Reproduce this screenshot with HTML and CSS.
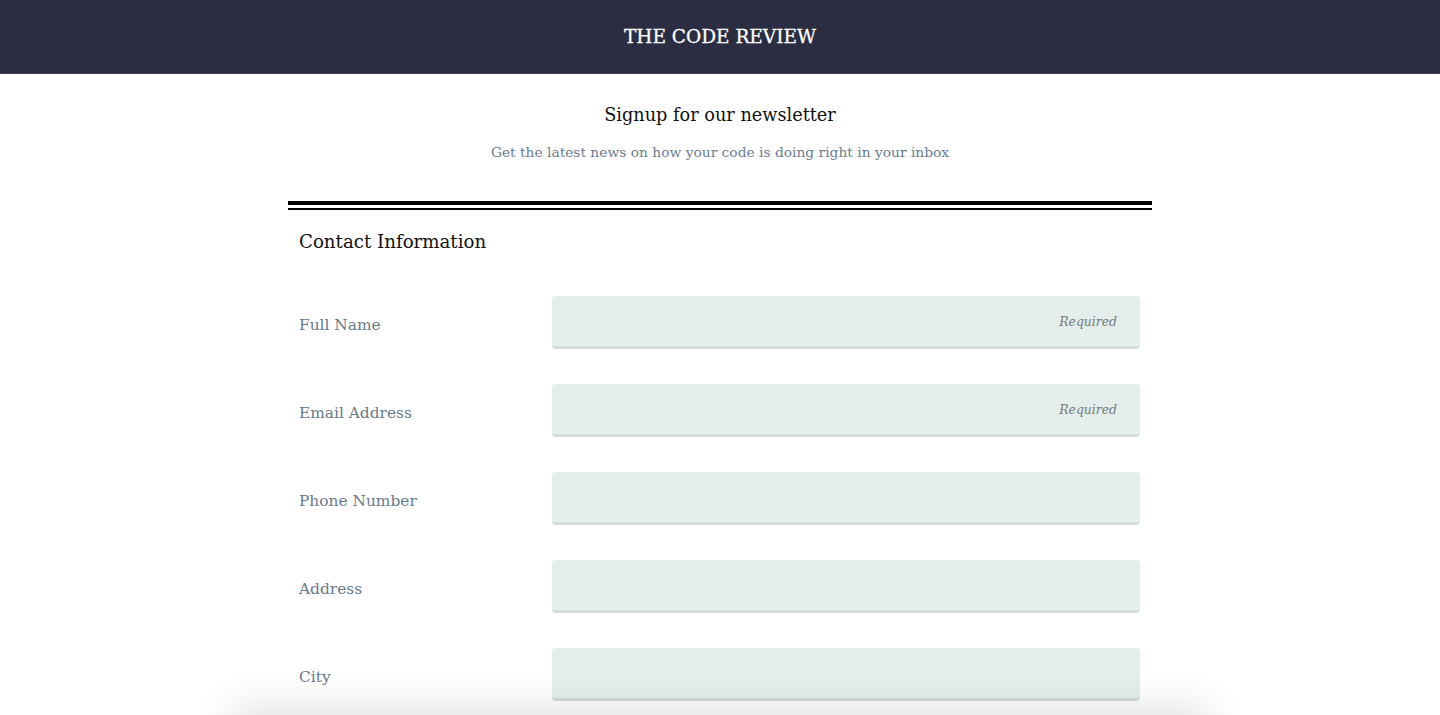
FILE: index.html
```html
<!DOCTYPE html>
<html lang="en">
<head>
<meta charset="utf-8">
<title>The Code Review</title>
<link rel="stylesheet" href="styles.css">
</head>
<body>
<header class="topbar">
  <h1 class="brand">THE CODE REVIEW</h1>
</header>
<main class="page">
  <section class="intro">
    <h2 class="intro-title">Signup for our newsletter</h2>
    <p class="intro-sub">Get the latest news on how your code is doing right in your inbox</p>
  </section>
  <form class="form">
    <h3 class="section-title">Contact Information</h3>
    <div class="row">
      <label class="label" for="name">Full Name</label>
      <input class="field" id="name" type="text" placeholder="Required">
    </div>
    <div class="row">
      <label class="label" for="email">Email Address</label>
      <input class="field" id="email" type="email" placeholder="Required">
    </div>
    <div class="row">
      <label class="label" for="phone">Phone Number</label>
      <input class="field" id="phone" type="tel">
    </div>
    <div class="row">
      <label class="label" for="address">Address</label>
      <input class="field" id="address" type="text">
    </div>
    <div class="row">
      <label class="label" for="city">City</label>
      <input class="field" id="city" type="text">
    </div>
  </form>
</main>
<div class="footer-shadow"></div>
</body>
</html>
```
FILE: styles.css
```css
* { box-sizing: border-box; }
html, body { margin: 0; padding: 0; }
body {
  font-family: "DejaVu Serif", "Liberation Serif", serif;
  background: #ffffff;
  color: #111;
  overflow: hidden;
}
.topbar {
  height: 74px;
  background: #2b2e42;
  display: flex;
  align-items: center;
  justify-content: center;
  border-bottom: 1px solid #3a3d50;
}
.brand {
  margin: 0;
  color: #ffffff;
  font-size: 18.5px;
  font-weight: 400;
  letter-spacing: 0;
  -webkit-text-stroke: 0.3px #ffffff;
}
.page {
  width: 864px;
  margin: 0 auto;
}
.intro {
  text-align: center;
  padding-top: 30px;
  padding-bottom: 39px;
}
.intro-title {
  margin: 0;
  font-size: 17.7px;
  font-weight: 400;
  color: #111;
  line-height: 22px;
}
.intro-sub {
  margin: 16px 0 0;
  font-size: 13.8px;
  color: #6b7c8f;
  line-height: 20px;
}
.form {
  border-top: 4px solid #000;
  padding: 0 11px;
  position: relative;
}
.form::before {
  content: "";
  position: absolute;
  left: 0;
  right: 0;
  top: 3px;
  height: 2px;
  background: #000;
}
.section-title {
  margin: 0;
  padding-top: 25px;
  font-size: 18.2px;
  font-weight: 400;
  line-height: 24px;
  color: #111;
}
.row {
  display: flex;
  align-items: center;
  height: 88px;
}
.section-title + .row { margin-top: 24px; }
.label {
  width: 253px;
  flex: none;
  font-size: 15.4px;
  color: #687a8d;
  padding-top: 6px;
}
.field {
  width: 588px;
  height: 53px;
  border: none;
  border-bottom: 3px solid #d4dddb;
  border-radius: 4px;
  background: #e5eeec;
  font-family: inherit;
  font-size: 12.4px;
  text-align: right;
  padding: 2px 23px 0;
  outline: none;
}
.field::placeholder {
  font-style: italic;
  color: #717a80;
}
.footer-shadow {
  position: fixed;
  top: 715px;
  left: 240px;
  width: 960px;
  height: 80px;
  box-shadow: 0 0 40px 8px rgba(0, 0, 0, 0.12);
  background: #fff;
}
```
